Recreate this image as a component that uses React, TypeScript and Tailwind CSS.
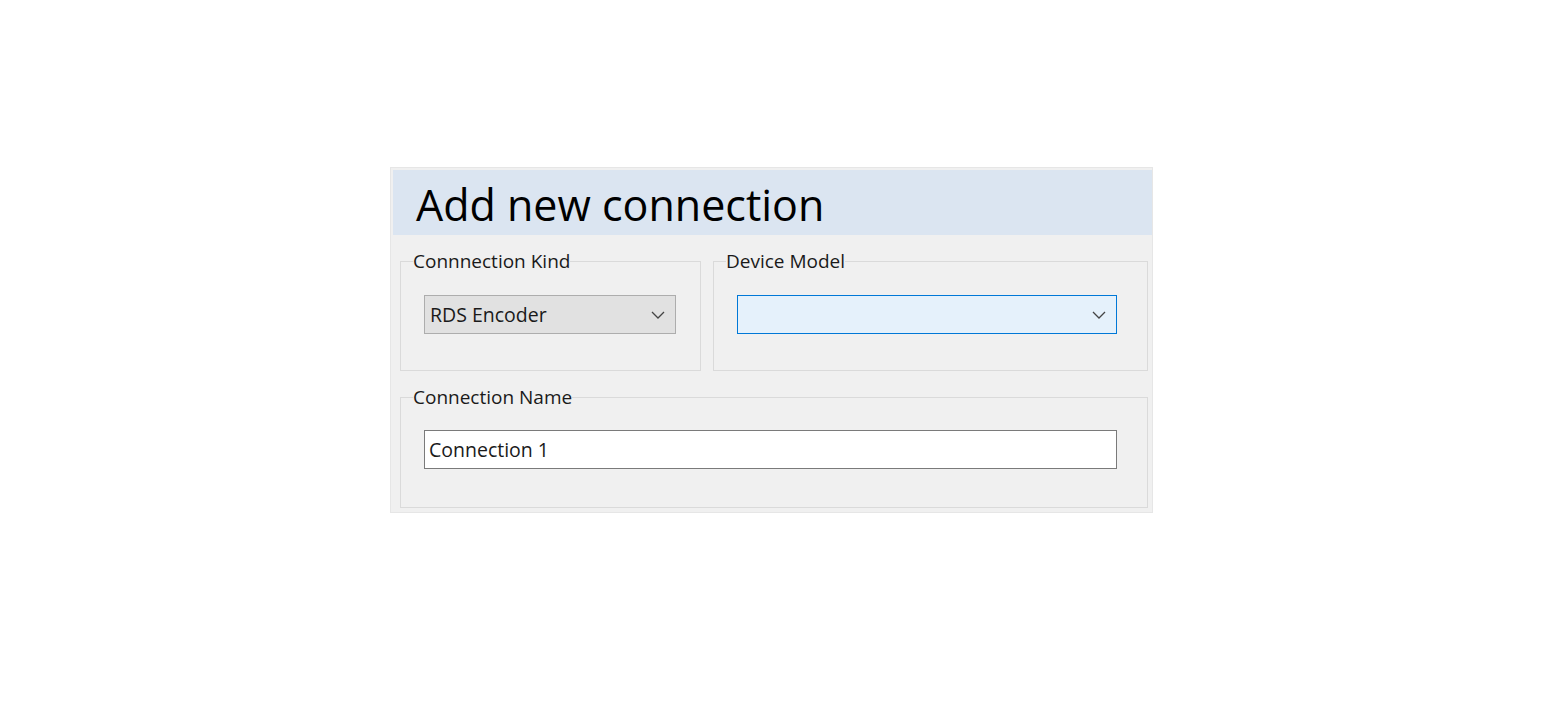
import type { ReactNode } from "react";

const font = { fontFamily: '"Open Sans", "Noto Sans", sans-serif' };

function Chevron() {
  return (
    <svg width="14" height="8" viewBox="0 0 14 8" fill="none" className="shrink-0">
      <path d="M1 1l6 6 6-6" stroke="#444" strokeWidth="1.3" />
    </svg>
  );
}

type GroupProps = {
  label: string;
  className?: string;
  children: ReactNode;
};

function Group({ label, className, children }: GroupProps) {
  return (
    <fieldset className={`border border-[#dadada] pl-[23px] ${className ?? ""}`}>
      <legend className="-ml-[11px] px-0 text-[19px] leading-[22px] text-[#1a1a1a]">
        {label}
      </legend>
      {children}
    </fieldset>
  );
}

export default function App() {
  return (
    <div className="min-h-screen bg-white pl-[390px] pt-[167px]" style={font}>
      <div className="flex h-[346px] w-[763px] flex-col border border-[#e6e6e6] bg-[#f0f0f0] pl-[2px] pt-[2px]">
        <div className="flex h-[65px] items-center bg-[#dbe5f1] pl-[23px] pt-[4px]">
          <h1 className="text-[43px] leading-none text-black">Add new connection</h1>
        </div>
        <div className="flex flex-col gap-[15px] pl-[7px] pr-[4px] pt-[15px]">
          <div className="flex gap-[12px]">
            <Group label="Connnection Kind" className="h-[121px] w-[301px]">
              <div className="mt-[23px] flex h-[39px] w-[252px] items-center justify-between border border-[#adadad] bg-[#e1e1e1] pl-[5px] pr-[10px]">
                <span className="text-[19.5px] text-[#1a1a1a]">RDS Encoder</span>
                <Chevron />
              </div>
            </Group>
            <Group label="Device Model" className="h-[121px] flex-1">
              <div className="mt-[23px] flex h-[39px] w-[380px] items-center justify-end border-[1.5px] border-[#0078d7] bg-[#e5f1fb] pr-[10px]">
                <Chevron />
              </div>
            </Group>
          </div>
          <Group label="Connection Name" className="h-[122px]">
            <div className="mt-[22px] flex h-[39px] w-[693px] items-center border-[1.5px] border-[#7a7a7a] bg-white pl-[4px]">
              <span className="text-[19.5px] text-[#1a1a1a]">Connection 1</span>
            </div>
          </Group>
        </div>
      </div>
    </div>
  );
}
